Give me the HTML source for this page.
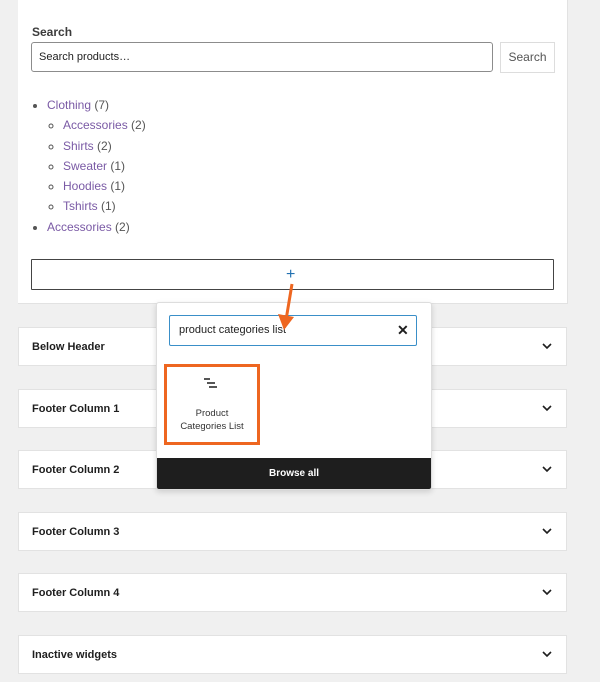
<!DOCTYPE html><html><head><style>
body{margin:0;width:600px;height:682px;background:#f0f0f0;font-family:"Liberation Sans",sans-serif;position:relative;overflow:hidden}
.a{position:absolute}
.p{position:absolute;left:18px;width:547px;height:37px;background:#fff;border:1px solid #e2e2e2}
.p b{position:absolute;left:13px;top:13px;font-size:11px;color:#1e1e1e}
.p svg{position:absolute;right:14px;top:14px}
li{margin:0;line-height:20.3px;font-size:12px;color:#555}
a{color:#7a5aa5;text-decoration:none}
</style></head><body>
<div class="a" style="left:18px;top:0;width:549px;height:303px;background:#fff;border-right:1px solid #e2e2e2;border-bottom:1px solid #e2e2e2"></div>
<div class="a" style="left:32px;top:25px;font-size:12px;font-weight:bold;color:#3c3c3c">Search</div>
<div class="a" style="left:31px;top:42px;width:460px;height:28px;border:1px solid #8c8c8c;border-radius:3px;font-size:11px;line-height:28px;text-indent:7px;color:#222">Search products…</div>
<div class="a" style="left:500px;top:42px;width:53px;height:29px;border:1px solid #ddd;font-size:12px;line-height:29px;text-align:center;color:#555">Search</div>
<ul class="a" style="left:0;top:95px;margin:0;padding-left:47px;list-style:disc">
<li><a>Clothing</a> (7)
<ul style="margin:0;padding-left:16px;list-style:circle"><li><a>Accessories</a> (2)</li><li><a>Shirts</a> (2)</li><li><a>Sweater</a> (1)</li><li><a>Hoodies</a> (1)</li><li><a>Tshirts</a> (1)</li></ul></li>
<li><a>Accessories</a> (2)</li>
</ul>
<div class="a" style="left:31px;top:259px;width:521px;height:29px;border:1px solid #444;border-radius:1px"></div>
<div class="a" style="left:286px;top:266px;font-size:16px;color:#2271b1">+</div>
<div class="p" style="top:327px"><b>Below Header</b><svg width="10" height="8"><path d="M1 2l4 4 4-4" fill="none" stroke="#1e1e1e" stroke-width="1.6"/></svg></div>
<div class="p" style="top:389px"><b>Footer Column 1</b><svg width="10" height="8"><path d="M1 2l4 4 4-4" fill="none" stroke="#1e1e1e" stroke-width="1.6"/></svg></div>
<div class="p" style="top:450px"><b>Footer Column 2</b><svg width="10" height="8"><path d="M1 2l4 4 4-4" fill="none" stroke="#1e1e1e" stroke-width="1.6"/></svg></div>
<div class="p" style="top:512px"><b>Footer Column 3</b><svg width="10" height="8"><path d="M1 2l4 4 4-4" fill="none" stroke="#1e1e1e" stroke-width="1.6"/></svg></div>
<div class="p" style="top:573px"><b>Footer Column 4</b><svg width="10" height="8"><path d="M1 2l4 4 4-4" fill="none" stroke="#1e1e1e" stroke-width="1.6"/></svg></div>
<div class="p" style="top:635px"><b>Inactive widgets</b><svg width="10" height="8"><path d="M1 2l4 4 4-4" fill="none" stroke="#1e1e1e" stroke-width="1.6"/></svg></div>
<div class="a" style="left:156px;top:302px;width:274px;height:186px;background:#fff;border:1px solid #ddd;border-radius:3px;box-shadow:0 2px 6px rgba(0,0,0,.15);overflow:hidden">
<div class="a" style="left:12px;top:12px;width:246px;height:29px;border:1.5px solid #3a8fc8;border-radius:2px;font-size:11px;line-height:29px;text-indent:9px;color:#1e1e1e">product categories list</div>
<div class="a" style="left:240px;top:19px;font-size:14px;font-weight:bold;color:#1e1e1e">✕</div>
<div class="a" style="left:7px;top:61px;width:90px;height:75px;border:3px solid #ee6620"></div>
<svg class="a" style="left:46px;top:75px" width="16" height="12"><path d="M1 1h6M4 5h8M6 9h8" stroke="#1e1e1e" stroke-width="1.5"/></svg>
<div class="a" style="left:10px;top:104px;width:90px;text-align:center;font-size:9.5px;line-height:13px;color:#333">Product<br>Categories List</div>
<div class="a" style="left:0;top:155px;width:274px;height:31px;background:#1e1e1e;color:#fff;font-size:10px;font-weight:bold;text-align:center;line-height:31px">Browse all</div>
</div>
<svg class="a" style="left:275px;top:280px" width="25" height="55"><path d="M17 4L11 40" stroke="#ee6620" stroke-width="3"/><path d="M3 34l16 3-10 13z" fill="#ee6620"/></svg>
</body></html>
